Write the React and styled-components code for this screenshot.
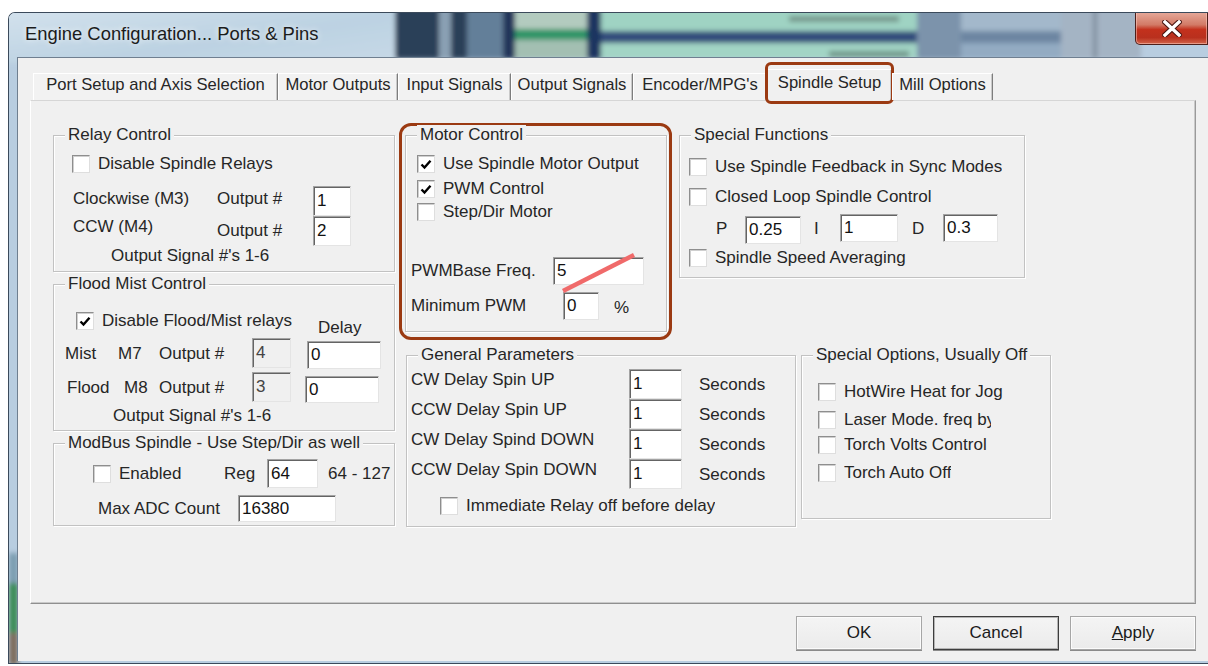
import React from 'react'
import styled, { createGlobalStyle } from 'styled-components'

const GlobalStyle = createGlobalStyle`
  html, body {
    margin: 0;
    padding: 0;
    background: #fff;
  }
  body {
    font-family: "Liberation Sans", Arial, sans-serif;
    color: #262626;
  }
`

const Screen = styled.div`
  width: 1208px;
  height: 666px;
  overflow: hidden;
  background: #fff;
  padding: 12px 0 0 8px;
  box-sizing: border-box;
`

const Window = styled.div`
  position: relative;
  width: 1200px;
  height: 652px;
  display: flex;
  flex-direction: column;
  box-sizing: border-box;
  border: 1px solid #3b4a5b;
  border-right: none;
  border-radius: 7px 0 0 0;
  overflow: hidden;
`

// blurred desktop showing through the aero frame
const Backdrop = styled.svg`
  position: absolute;
  left: 0;
  top: 0;
  display: block;
`

const TitleBar = styled.div`
  position: relative;
  height: 44px;
  display: flex;
  align-items: flex-start;
  flex: none;
`

const Title = styled.div`
  padding: 10px 0 0 16px;
  font-size: 18.4px;
  color: #1b1b1b;
  text-shadow: 0 0 6px rgba(255, 255, 255, 0.9);
`

const CloseButton = styled.div`
  margin-left: auto;
  margin-top: -1px;
  width: 73px;
  height: 33px;
  box-sizing: border-box;
  border: 1px solid #4e1f1a;
  border-top: none;
  border-radius: 0 0 0 5px;
  background: linear-gradient(180deg, #e6aa9b 0%, #d27a66 40%, #c3311d 55%, #b9301e 80%, #d2654a 100%);
  box-shadow: inset 0 0 0 1px rgba(255, 210, 200, 0.5);
  display: flex;
  align-items: center;
  justify-content: center;
`

const Body = styled.div`
  position: relative;
  flex: 1;
  display: flex;
  padding: 0 0 2px 8px;
`

const Client = styled.div`
  flex: 1;
  background: #f0f0f0;
  border-top: 1px solid #6f7f90;
  border-left: 1px solid #6f7f90;
  padding: 11px 12px 0 12px;
  display: flex;
  flex-direction: column;
`

const TabStrip = styled.div`
  display: flex;
  align-items: flex-end;
  height: 31px;
  padding-left: 3px;
  position: relative;
  z-index: 2;
`

const Tab = styled.div`
  position: relative;
  width: ${p => p.$w}px;
  height: ${p => (p.$active ? 32 : 27)}px;
  margin-bottom: ${p => (p.$active ? -1 : 0)}px;
  box-sizing: border-box;
  display: flex;
  align-items: center;
  justify-content: center;
  padding-bottom: ${p => (p.$active ? 6 : 4)}px;
  font-size: 16.6px;
  white-space: nowrap;
  background: ${p => (p.$active ? '#f0f0f0' : '#f2f2f2')};
  border-top: 1px solid #fff;
  border-left: 1px solid #fff;
  border-right: 1px solid #7d7d7d;
  box-shadow: inset -1px 0 0 #c9c9c9;

  &::after {
    content: '';
    display: ${p => (p.$active ? 'block' : 'none')};
    position: absolute;
    top: -8px;
    left: -3px;
    right: -3px;
    bottom: -3px;
    border: 3px solid #9b3a12;
    border-radius: 6px;
  }
`

const Panel = styled.div`
  width: 1166px;
  height: 504px;
  box-sizing: border-box;
  border: 1px solid;
  border-color: #d6d6d6 #9a9a9a #8f8f8f #ffffff;
  box-shadow: inset -1px -1px 0 #c9c9c9;
  padding: 34px 0 0 22px;
  display: flex;
  gap: 10px;
`

const Column = styled.div`
  display: flex;
  flex-direction: column;
  gap: ${p => p.$gap}px;
`

const Stack = styled.div`
  display: flex;
  flex-direction: column;
  gap: 23px;
`

const Pair = styled.div`
  display: flex;
  align-items: flex-start;
  gap: ${p => p.$gap}px;
`

const Group = styled.div`
  position: relative;
  flex: none;
  box-sizing: border-box;
  width: ${p => p.$w}px;
  height: ${p => p.$h}px;
  margin-left: ${p => p.$ml || 0}px;
  border: 1px solid #c2c2c2;
  box-shadow: inset 1px 1px 0 #fff, 1px 1px 0 #fff;
  display: flex;
  flex-direction: column;
  font-size: 17px;
`

const Legend = styled.span`
  position: absolute;
  top: -11px;
  left: 11px;
  padding: 0 3px;
  line-height: 20px;
  background: #f0f0f0;
  white-space: nowrap;
`

// brown marker drawn round a group
const Marker = styled.div`
  position: absolute;
  top: -13px;
  left: -7px;
  right: -6px;
  bottom: -9px;
  border: 3px solid #9b3a12;
  border-radius: 12px;
  pointer-events: none;
`

const Stroke = styled.svg`
  position: absolute;
  left: 0;
  top: 0;
  pointer-events: none;
  overflow: visible;
`

const Row = styled.div`
  display: flex;
  align-items: center;
  flex: none;
  height: ${p => p.$h || 20}px;
  margin-top: ${p => p.$mt || 0}px;
  padding-left: ${p => p.$pl || 0}px;
`

const Cell = styled.span`
  flex: none;
  width: ${p => (p.$w ? `${p.$w}px` : 'auto')};
  padding-left: ${p => p.$pl || 0}px;
  padding-bottom: ${p => p.$up || 0}px;
  padding-top: ${p => p.$down || 0}px;
  box-sizing: border-box;
  white-space: nowrap;
  line-height: 20px;
`

const CheckLabel = styled.span`
  display: flex;
  align-items: center;
  gap: 8px;
  flex: none;
  width: ${p => (p.$w ? `${p.$w}px` : 'auto')};
  white-space: nowrap;
  line-height: 20px;
`

const ClipText = styled.span`
  display: block;
  overflow: hidden;
  max-width: ${p => (p.$clip ? `${p.$clip}px` : 'none')};
`

const Box = styled.span`
  width: 18px;
  height: 18px;
  flex: none;
  box-sizing: border-box;
  background: #fff;
  border: 1px solid;
  border-color: #8e8e8e #dedede #dedede #8e8e8e;
  box-shadow: inset 1px 1px 0 #cfcfcf;
  display: flex;
  align-items: center;
  justify-content: center;
`

const Field = styled.span`
  flex: none;
  width: ${p => p.$w}px;
  height: ${p => p.$h || 28}px;
  margin-left: ${p => p.$ml || 0}px;
  align-self: ${p => p.$align || 'center'};
  box-sizing: border-box;
  background: ${p => (p.$disabled ? '#f0f0f0' : '#fff')};
  color: ${p => (p.$disabled ? '#444' : '#111')};
  border: 1px solid;
  border-color: #a3a3a3 #e4e4e4 #e4e4e4 #a3a3a3;
  box-shadow: inset 1px 1px 0 #646464;
  padding: ${p => (p.$disabled ? '4px 0 0 3px' : '0 0 0 3px')};
  display: flex;
  align-items: ${p => (p.$disabled ? 'flex-start' : 'center')};
  line-height: 20px;
`

const ButtonRow = styled.div`
  width: 1166px;
  margin-top: 12px;
  display: flex;
  justify-content: flex-end;
  gap: 11px;
`

const Button = styled.div`
  width: 126px;
  height: 34px;
  box-sizing: border-box;
  background: linear-gradient(180deg, #f4f4f4, #ebebeb);
  border: 1px solid ${p => (p.$default ? '#3d3d3d' : '#a6a6a6')};
  box-shadow: inset 0 0 0 1px ${p => (p.$default ? '#b4b4b4' : '#fbfbfb')}, 0 1px 0 #8a8a8a;
  display: flex;
  align-items: center;
  justify-content: center;
  font-size: 17px;
  color: #1a1a1a;
`

// x, y, w, h, fill — blocks of the desktop behind the glass (window coordinates)
const desktop = [
  [386, -10, 44, 56, '#2c4058'],
  [430, -10, 12, 56, '#8aa0b4'],
  [442, -10, 16, 56, '#2b4058'],
  [458, -10, 36, 56, '#647f99'],
  [494, -10, 12, 56, '#22365a'],
  [506, -10, 72, 26, '#b3cbbf'],
  [506, 16, 72, 11, '#2f9568'],
  [506, 27, 72, 19, '#a3bfb2'],
  [578, -10, 14, 56, '#1f3561'],
  [592, -10, 316, 28, '#9fd3c3'],
  [592, 18, 316, 12, '#314d7b'],
  [592, 30, 316, 16, '#a2d4c5'],
  [780, 3, 110, 6, '#76968b'],
  [820, 38, 80, 6, '#6f9588'],
  [908, -10, 44, 56, '#7b93ab'],
  [952, -10, 100, 28, '#a3b8cb'],
  [952, 18, 100, 12, '#6d86a2'],
  [952, 30, 100, 16, '#93abc2'],
  [1052, -10, 80, 56, '#a4b4c4'],
  [1084, -10, 4, 56, '#7d8c9b'],
  [0, 540, 9, 30, '#7a9cb0'],
  [0, 570, 9, 50, '#3b8b55'],
  [0, 620, 9, 32, '#7c6a5a'],
]

const DesktopBackdrop = () => (
  <Backdrop width="1200" height="652" viewBox="0 0 1200 652">
    <defs>
      <linearGradient id="sheen" x1="0" y1="0" x2="1" y2="1">
        <stop offset="0" stopColor="#d6e4ee" />
        <stop offset="0.6" stopColor="#bcd2e2" />
        <stop offset="1" stopColor="#c7d9e7" />
      </linearGradient>
      <filter id="soft" filterUnits="userSpaceOnUse" x="-20" y="-20" width="1240" height="700">
        <feGaussianBlur stdDeviation="2.5" />
      </filter>
    </defs>
    <rect x="0" y="0" width="1200" height="652" fill="#b8cde0" />
    <g filter="url(#soft)">
      <rect x="-10" y="-10" width="396" height="60" fill="url(#sheen)" />
      {desktop.map(([x, y, w, h, fill], i) => (
        <rect key={i} x={x} y={y} width={w} height={h} fill={fill} />
      ))}
    </g>
  </Backdrop>
)

const Tick = () => (
  <svg width="12" height="11" viewBox="0 0 12 11">
    <path d="M1.5 5.5 L4.5 8.5 L10.5 1.8" fill="none" stroke="#000" strokeWidth="2.4" />
  </svg>
)

const Check = ({ on, children, w, clip }) => (
  <CheckLabel $w={w}>
    <Box>{on && <Tick />}</Box>
    <ClipText $clip={clip}>{children}</ClipText>
  </CheckLabel>
)

const tabs = [
  { label: 'Port Setup and Axis Selection', w: 245 },
  { label: 'Motor Outputs', w: 120 },
  { label: 'Input Signals', w: 113 },
  { label: 'Output Signals', w: 122 },
  { label: "Encoder/MPG's", w: 134 },
  { label: 'Spindle Setup', w: 125, active: true },
  { label: 'Mill Options', w: 101 },
]

const delays = [
  'CW Delay Spin UP',
  'CCW Delay Spin UP',
  'CW Delay Spind DOWN',
  'CCW Delay Spin DOWN',
]

const RelayControl = () => (
  <Group $w={342} $h={137}>
    <Legend>Relay Control</Legend>
    <Row $mt={18} $pl={18}>
      <Check>Disable Spindle Relays</Check>
    </Row>
    <Row $mt={12} $h={30} $pl={19}>
      <Cell $w={144} $up={5}>Clockwise (M3)</Cell>
      <Cell $w={96} $up={4}>Output #</Cell>
      <Field $w={38} $h={30}>1</Field>
    </Row>
    <Row $h={30} $pl={19}>
      <Cell $w={144} $up={8}>CCW (M4)</Cell>
      <Cell $w={96}>Output #</Cell>
      <Field $w={38} $h={30}>2</Field>
    </Row>
    <Row $pl={57}>
      <Cell>Output Signal #'s 1-6</Cell>
    </Row>
  </Group>
)

const FloodMist = () => (
  <Group $w={342} $h={147}>
    <Legend>Flood Mist Control</Legend>
    <Row $mt={26} $pl={22}>
      <Check on w={242}>Disable Flood/Mist relays</Check>
      <Cell $down={14}>Delay</Cell>
    </Row>
    <Row $mt={7} $h={31} $pl={11}>
      <Cell $w={53}>Mist</Cell>
      <Cell $w={41}>M7</Cell>
      <Cell $w={93}>Output #</Cell>
      <Field $w={39} $h={30} $align="flex-start" $disabled>4</Field>
      <Field $w={74} $h={28} $ml={16} $align="flex-end">0</Field>
    </Row>
    <Row $mt={3} $h={31} $pl={13}>
      <Cell $w={57}>Flood</Cell>
      <Cell $w={35}>M8</Cell>
      <Cell $w={93}>Output #</Cell>
      <Field $w={39} $h={30} $align="flex-start" $disabled>3</Field>
      <Field $w={74} $h={27} $ml={14} $align="flex-end">0</Field>
    </Row>
    <Row $mt={3} $pl={59}>
      <Cell>Output Signal #'s 1-6</Cell>
    </Row>
  </Group>
)

const ModBus = () => (
  <Group $w={342} $h={83}>
    <Legend>ModBus Spindle - Use Step/Dir as well</Legend>
    <Row $mt={15} $h={29} $pl={39}>
      <Check w={131}>Enabled</Check>
      <Cell $w={43}>Reg</Cell>
      <Field $w={51} $h={29}>64</Field>
      <Cell $pl={10}>64 - 127</Cell>
    </Row>
    <Row $mt={7} $h={27} $pl={44}>
      <Cell $w={140}>Max ADC Count</Cell>
      <Field $w={98} $h={27}>16380</Field>
    </Row>
  </Group>
)

const MotorControl = () => (
  <Group $w={262} $h={197}>
    <Marker />
    <Legend>Motor Control</Legend>
    <Row $mt={18} $pl={11}>
      <Check on>Use Spindle Motor Output</Check>
    </Row>
    <Row $mt={5} $pl={11}>
      <Check on>PWM Control</Check>
    </Row>
    <Row $mt={3} $pl={11}>
      <Check>Step/Dir Motor</Check>
    </Row>
    <Row $mt={35} $h={28} $pl={5}>
      <Cell $w={142}>PWMBase Freq.</Cell>
      <Field $w={91} $h={28}>5</Field>
    </Row>
    <Row $mt={7} $h={28} $pl={5}>
      <Cell $w={152}>Minimum PWM</Cell>
      <Field $w={36} $h={28}>0</Field>
      <Cell $pl={15} $down={4}>%</Cell>
    </Row>
    <Stroke width="262" height="197">
      <line x1="157" y1="155" x2="228" y2="119" stroke="#f06a6a" strokeWidth="4.5" />
    </Stroke>
  </Group>
)

const SpecialFunctions = () => (
  <Group $w={346} $h={143}>
    <Legend>Special Functions</Legend>
    <Row $mt={21} $pl={9}>
      <Check>Use Spindle Feedback in Sync Modes</Check>
    </Row>
    <Row $mt={10} $pl={9}>
      <Check>Closed Loop Spindle Control</Check>
    </Row>
    <Row $mt={7} $h={30} $pl={36}>
      <Cell $w={29}>P</Cell>
      <Field $w={56} $h={28} $align="flex-end">0.25</Field>
      <Cell $w={39} $pl={13}>I</Cell>
      <Field $w={58} $h={28} $align="flex-start">1</Field>
      <Cell $w={45} $pl={14}>D</Cell>
      <Field $w={55} $h={28} $align="flex-start">0.3</Field>
    </Row>
    <Row $mt={4} $pl={9}>
      <Check>Spindle Speed Averaging</Check>
    </Row>
  </Group>
)

const GeneralParameters = () => (
  <Group $w={390} $h={172} $ml={1}>
    <Legend>General Parameters</Legend>
    {delays.map((label, i) => (
      <Row key={label} $mt={i === 0 ? 13 : 0} $h={30} $pl={4}>
        <Cell $w={218} $up={9}>{label}</Cell>
        <Field $w={53} $h={30}>1</Field>
        <Cell $pl={17} $down={2}>Seconds</Cell>
      </Row>
    ))}
    <Row $mt={7} $pl={33}>
      <Check>Immediate Relay off before delay</Check>
    </Row>
  </Group>
)

const SpecialOptions = () => (
  <Group $w={250} $h={164}>
    <Legend>Special Options, Usually Off</Legend>
    <Row $mt={26} $pl={16}>
      <Check>HotWire Heat for Jog</Check>
    </Row>
    <Row $mt={8} $pl={16}>
      <Check clip={147}>Laser Mode. freq by</Check>
    </Row>
    <Row $mt={5} $pl={16}>
      <Check>Torch Volts Control</Check>
    </Row>
    <Row $mt={8} $pl={16}>
      <Check>Torch Auto Off</Check>
    </Row>
  </Group>
)

export default function App() {
  return (
    <>
      <GlobalStyle />
      <Screen>
        <Window>
          <DesktopBackdrop />
          <TitleBar>
            <Title>Engine Configuration... Ports &amp; Pins</Title>
            <CloseButton>
              <svg width="20" height="17" viewBox="0 0 20 17">
                <path d="M3 2 L17 15 M17 2 L3 15" stroke="#4a1510" strokeWidth="5.5" strokeLinecap="square" />
                <path d="M3 2 L17 15 M17 2 L3 15" stroke="#fff" strokeWidth="3.4" strokeLinecap="square" />
              </svg>
            </CloseButton>
          </TitleBar>
          <Body>
            <Client>
              <TabStrip>
                {tabs.map(t => (
                  <Tab key={t.label} $w={t.w} $active={t.active}>{t.label}</Tab>
                ))}
              </TabStrip>
              <Panel>
                <Column $gap={12}>
                  <RelayControl />
                  <FloodMist />
                  <ModBus />
                </Column>
                <Stack>
                  <Pair $gap={12}>
                    <MotorControl />
                    <SpecialFunctions />
                  </Pair>
                  <Pair $gap={5}>
                    <GeneralParameters />
                    <SpecialOptions />
                  </Pair>
                </Stack>
              </Panel>
              <ButtonRow>
                <Button>OK</Button>
                <Button $default>Cancel</Button>
                <Button><span><u>A</u>pply</span></Button>
              </ButtonRow>
            </Client>
          </Body>
        </Window>
      </Screen>
    </>
  )
}
